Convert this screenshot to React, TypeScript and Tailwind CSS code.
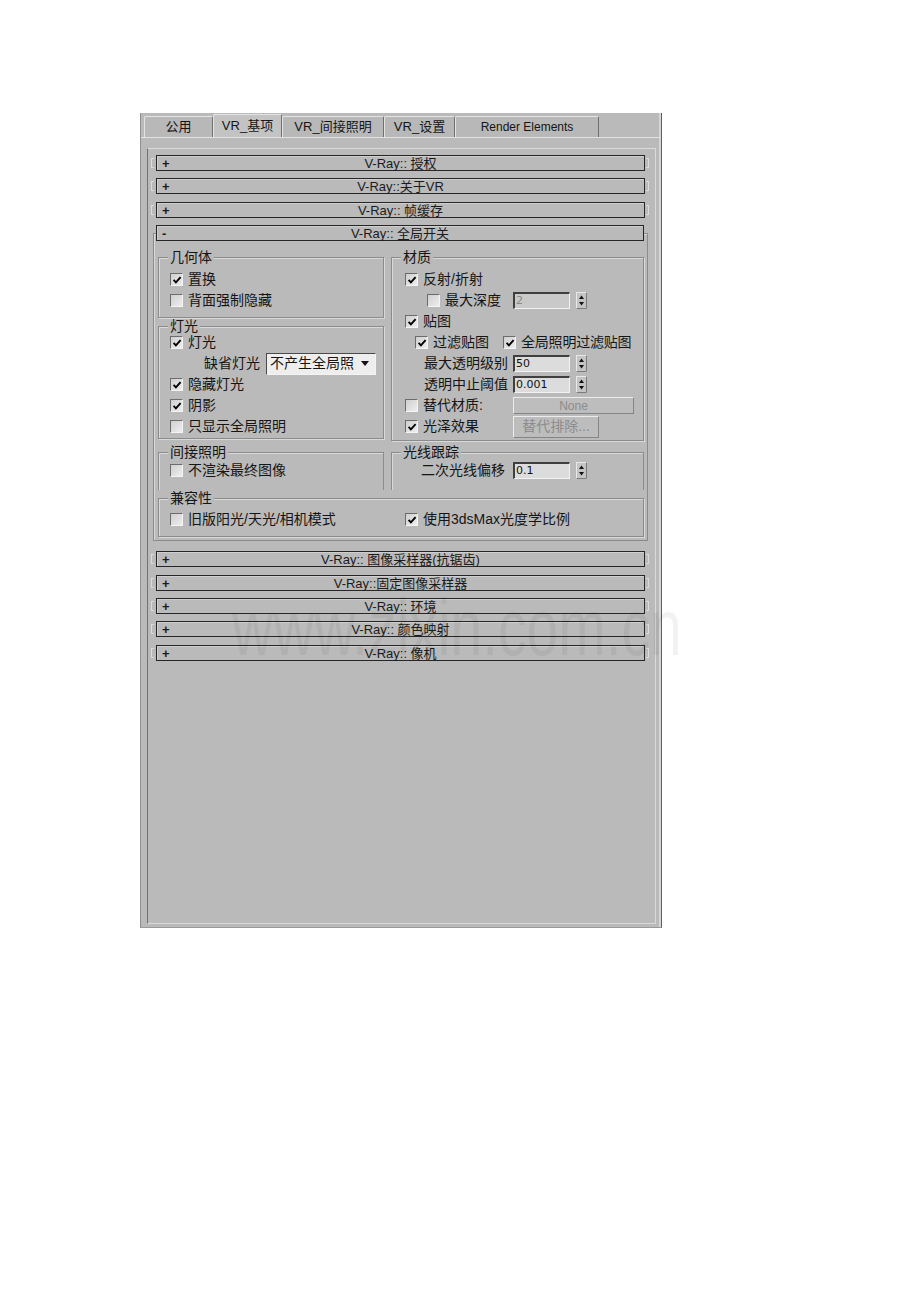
import type { ReactNode } from 'react';
import clsx from 'clsx';

const BG = 'bg-[#bababa]';

function Check({ on = false }: { on?: boolean }) {
  return (
    <span className="flex h-[13px] w-[13px] shrink-0 items-center justify-center border-t border-l border-t-[#6c6c6c] border-l-[#6c6c6c] border-r border-b border-r-[#f4f4f4] border-b-[#f4f4f4] bg-gradient-to-br from-[#cfcfcf] to-[#eeeeee]">
      {on ? (
        <svg viewBox="0 0 10 10" className="h-[10px] w-[10px]">
          <path d="M1.6 4.9 L3.9 7.4 L8.6 2.1" fill="none" stroke="#000" strokeWidth="1.9" />
        </svg>
      ) : null}
    </span>
  );
}

function CheckItem({ on, label, className }: { on?: boolean; label: string; className?: string }) {
  return (
    <div className={clsx('flex items-center gap-[5px]', className)}>
      <Check on={on} />
      <span>{label}</span>
    </div>
  );
}

function Spinner({ value, disabled = false }: { value: string; disabled?: boolean }) {
  return (
    <div className="flex items-center gap-[6px]">
      <div
        className={clsx(
          'flex h-[17px] w-[57px] items-center border-t-2 border-l-2 border-t-[#3f3f3f] border-l-[#3f3f3f] border-r border-b border-r-[#f2f2f2] border-b-[#f2f2f2] pl-[1px] font-["DejaVu_Sans",sans-serif] text-[11px]',
          disabled ? 'bg-[#c9c9c9] text-[#8a8a8a]' : 'bg-[#dcdcdc] text-[#111]',
        )}
      >
        {value}
      </div>
      <svg viewBox="0 0 11 17" className="h-[17px] w-[11px]">
        <rect x="0.5" y="0.5" width="10" height="16" fill="#c4c4c4" stroke="#e8e8e8" />
        <line x1="0.5" y1="16.5" x2="10.5" y2="16.5" stroke="#7c7c7c" />
        <line x1="10.5" y1="0.5" x2="10.5" y2="16.5" stroke="#7c7c7c" />
        <path d="M3 7 L5.5 3.5 L8 7 Z" fill="#111" />
        <path d="M3 10 L5.5 13.5 L8 10 Z" fill="#111" />
      </svg>
    </div>
  );
}

function FlatButton({ label, className }: { label: string; className?: string }) {
  return (
    <div
      className={clsx(
        'flex items-center justify-center border-t border-l border-t-[#ececec] border-l-[#ececec] border-r border-b border-r-[#858585] border-b-[#858585] bg-[#bdbdbd] text-[#8c8c8c]',
        className,
      )}
    >
      {label}
    </div>
  );
}

function Group({
  label,
  open = false,
  className,
  children,
}: {
  label: string;
  open?: boolean;
  className?: string;
  children: ReactNode;
}) {
  return (
    <fieldset
      className={clsx(
        'min-w-0 border border-[#8b8b8b]',
        open ? 'border-b-0 shadow-[inset_1px_1px_0_#d9d9d9]' : 'shadow-[inset_1px_1px_0_#d9d9d9,1px_1px_0_#d9d9d9]',
        className,
      )}
    >
      <legend className={clsx('ml-[9px] px-[2px] text-[14px] leading-[12px]', BG)}>{label}</legend>
      {children}
    </fieldset>
  );
}

function Bar({ title, open = false }: { title: string; open?: boolean }) {
  return (
    <div
      className={clsx(
        'grid h-[16px] grid-cols-[24px_1fr_24px] items-center border border-[#262626] text-[13px] leading-none text-[#1b1b1b] shadow-[inset_1px_1px_0_#cfcfcf]',
        BG,
      )}
    >
      <span className="pl-[5px] font-bold">{open ? '-' : '+'}</span>
      <span className="text-center">{title}</span>
      <span />
    </div>
  );
}

function Rollout({ title, className }: { title: string; className?: string }) {
  return (
    <div className={clsx('flex items-center', className)}>
      <span className="h-[10px] w-[3px] shrink-0 border-y border-l border-[#dcdcdc]" />
      <div className="ml-[2px] flex-1">
        <Bar title={title} />
      </div>
      <span className="ml-[1px] h-[10px] w-[3px] shrink-0 border-y border-r border-[#dcdcdc]" />
    </div>
  );
}

const tabs = [
  { label: '公用', w: 'w-[69px]' },
  { label: 'VR_基项', w: 'w-[69px]', active: true },
  { label: 'VR_间接照明', w: 'w-[102px]' },
  { label: 'VR_设置', w: 'w-[71px]' },
  { label: 'Render Elements', w: 'w-[144px]', small: true },
];

export default function App() {
  return (
    <div className="relative min-h-[1302px] w-[920px] bg-white pl-[140px] pt-[113px] font-['Liberation_Sans','Noto_Sans_CJK_SC',sans-serif] text-[#151515]">
      <div
        className={clsx(
          'flex h-[815px] w-[522px] flex-col border-l border-r border-b border-l-[#8f8f8f] border-r-[#5e5e5e] border-b-[#9a9a9a] shadow-[inset_-2px_0_0_#d6d6d6]',
          BG,
        )}
      >
        {/* tab strip */}
        <div className="flex h-[24px] items-end pl-[3px]">
          {tabs.map((tab) => (
            <div
              key={tab.label}
              className={clsx(
                'flex items-center justify-center rounded-t-[2px] border-t border-l border-r border-t-[#e4e4e4] border-l-[#e4e4e4] border-r-[#6f6f6f]',
                tab.w,
                tab.active ? 'h-[23px] bg-[#c3c3c3]' : 'h-[21px] bg-[#b8b8b8]',
                tab.small ? 'text-[12px]' : 'text-[13px]',
              )}
            >
              {tab.label}
            </div>
          ))}
        </div>

        {/* content area */}
        <div className="flex flex-1 flex-col border-t border-[#e2e2e2] pt-[10px] pr-[5px] pb-[3px] pl-[6px]">
          <div className="flex-1 border border-t-[#dadada] border-r-[#dadada] border-b-[#dadada] border-l-[#727272] pt-[6px] pr-[6px] pl-[3px]">
            <Rollout title="V-Ray:: 授权" />
            <Rollout title="V-Ray::关于VR" className="mt-[7px]" />
            <Rollout title="V-Ray:: 帧缓存" className="mt-[8px]" />

            {/* expanded rollout */}
            <div className="mt-[15px] ml-[2px] mr-[1px] border border-[#8b8b8b] pb-[3px] shadow-[inset_1px_1px_0_#d9d9d9]">
              <div className="-mt-[9px] ml-[2px] mr-[3px]">
                <Bar title="V-Ray:: 全局开关" open />
              </div>

              <div className="mt-[10px] flex gap-[7px] pl-[4px] pr-[3px] text-[14px]">
                {/* left column */}
                <div className="flex w-[226px] flex-col">
                  <Group label="几何体" className="pt-[6px] pb-[6px]">
                    <CheckItem on label="置换" className="h-[21px] pl-[11px]" />
                    <CheckItem label="背面强制隐藏" className="h-[21px] pl-[11px]" />
                  </Group>

                  <Group label="灯光" className="mt-[2px] pb-[1px]">
                    <CheckItem on label="灯光" className="h-[21px] pl-[11px]" />
                    <div className="flex h-[21px] items-center gap-[6px] pl-[45px]">
                      <span>缺省灯光</span>
                      <div className="flex h-[22px] w-[110px] items-center justify-between border-t border-l border-t-[#4a4a4a] border-l-[#4a4a4a] border-r border-b border-r-[#f4f4f4] border-b-[#f4f4f4] bg-[#eeeeee] pl-[3px] pr-[6px]">
                        <span>不产生全局照</span>
                        <svg viewBox="0 0 8 5" className="h-[5px] w-[8px]">
                          <path d="M0 0 H8 L4 5 Z" fill="#111" />
                        </svg>
                      </div>
                    </div>
                    <CheckItem on label="隐藏灯光" className="h-[21px] pl-[11px]" />
                    <CheckItem on label="阴影" className="h-[21px] pl-[11px]" />
                    <CheckItem label="只显示全局照明" className="h-[21px] pl-[11px]" />
                  </Group>

                  <Group label="间接照明" open className="mt-[7px] pt-[2px] pb-[9px]">
                    <CheckItem label="不渲染最终图像" className="h-[21px] pl-[11px]" />
                  </Group>
                </div>

                {/* right column */}
                <div className="flex flex-1 flex-col">
                  <Group label="材质" className="pt-[6px] pb-[3px]">
                    <CheckItem on label="反射/折射" className="h-[21px] pl-[13px]" />
                    <div className="flex h-[21px] items-center">
                      <CheckItem label="最大深度" className="w-[121px] pl-[35px]" />
                      <Spinner value="2" disabled />
                    </div>
                    <CheckItem on label="贴图" className="h-[21px] pl-[13px]" />
                    <div className="flex h-[21px] items-center">
                      <CheckItem on label="过滤贴图" className="w-[111px] pl-[23px]" />
                      <CheckItem on label="全局照明过滤贴图" className="tracking-[-0.2px]" />
                    </div>
                    <div className="flex h-[21px] items-center">
                      <span className="w-[121px] pl-[32px]">最大透明级别</span>
                      <Spinner value="50" />
                    </div>
                    <div className="flex h-[21px] items-center">
                      <span className="w-[121px] pl-[32px]">透明中止阈值</span>
                      <Spinner value="0.001" />
                    </div>
                    <div className="flex h-[21px] items-center">
                      <CheckItem label="替代材质:" className="w-[121px] pl-[13px]" />
                      <FlatButton label="None" className="h-[17px] w-[121px] text-[12px]" />
                    </div>
                    <div className="flex h-[21px] items-center">
                      <CheckItem on label="光泽效果" className="w-[121px] pl-[13px]" />
                      <FlatButton label="替代排除..." className="h-[22px] w-[86px] text-[14px]" />
                    </div>
                  </Group>

                  <Group label="光线跟踪" open className="mt-[5px] pt-[2px] pb-[9px]">
                    <div className="flex h-[21px] items-center">
                      <span className="w-[121px] pl-[29px]">二次光线偏移</span>
                      <Spinner value="0.1" />
                    </div>
                  </Group>
                </div>
              </div>

              <Group label="兼容性" className="mt-[2px] ml-[4px] mr-[3px] pt-[5px] pb-[6px] text-[14px]">
                <div className="flex h-[21px] items-center pl-[11px]">
                  <CheckItem label="旧版阳光/天光/相机模式" className="w-[235px]" />
                  <CheckItem on label="使用3dsMax光度学比例" />
                </div>
              </Group>
            </div>

            <Rollout title="V-Ray:: 图像采样器(抗锯齿)" className="mt-[10px]" />
            <Rollout title="V-Ray::固定图像采样器" className="mt-[8px]" />
            <Rollout title="V-Ray:: 环境" className="mt-[7px]" />
            <Rollout title="V-Ray:: 颜色映射" className="mt-[7px]" />
            <Rollout title="V-Ray:: 像机" className="mt-[8px]" />
          </div>
        </div>
      </div>

      {/* watermark */}
      <div className="pointer-events-none absolute left-[232px] top-[588px] origin-top scale-y-[1.4] whitespace-nowrap font-['Liberation_Sans',sans-serif] text-[57px] leading-none text-black/5">
        www.zixin.com.cn
      </div>
    </div>
  );
}
